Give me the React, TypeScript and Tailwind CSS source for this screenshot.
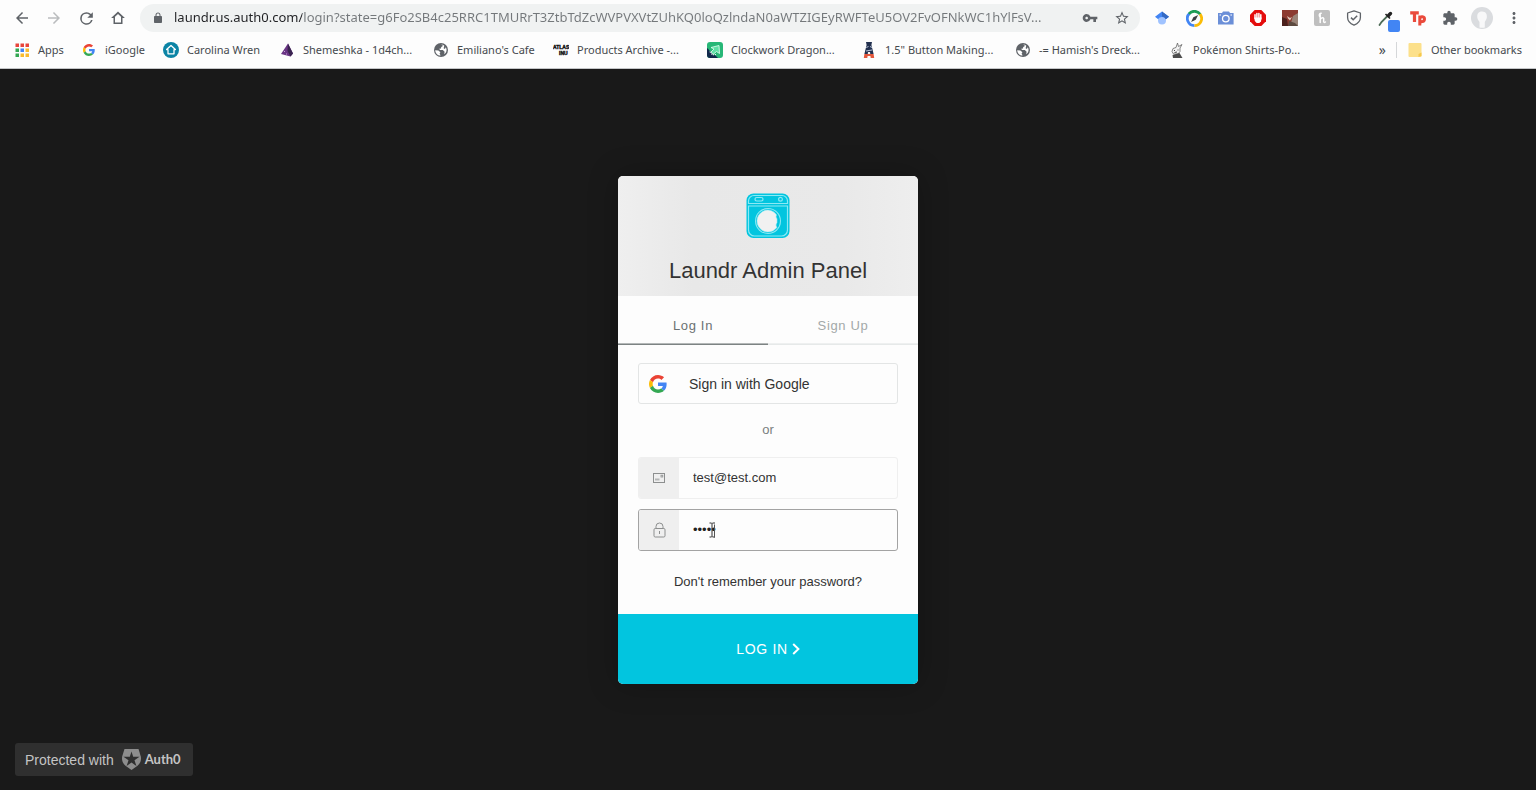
import type { ReactNode } from "react";
import { useState } from "react";

const URL_TEXT =
  "laundr.us.auth0.com/login?state=g6Fo2SB4c25RRC1TMURrT3ZtbTdZcWVPVXVtZUhKQ0loQzlndaN0aWTZIGEyRWFTeU5OV2FvOFNkWC1hYlFsV...";

function GoogleLogo({ className }: { className: string }) {
  return (
    <svg viewBox="0 0 48 48" className={className} aria-hidden="true">
      <path fill="#EA4335" d="M24 9.5c3.54 0 6.71 1.22 9.21 3.6l6.85-6.85C35.9 2.38 30.47 0 24 0 14.62 0 6.51 5.38 2.56 13.22l7.98 6.19C12.43 13.72 17.74 9.5 24 9.5z" />
      <path fill="#4285F4" d="M46.98 24.55c0-1.57-.15-3.09-.38-4.55H24v9.02h12.94c-.58 2.96-2.26 5.48-4.78 7.18l7.73 6c4.51-4.18 7.09-10.36 7.09-17.65z" />
      <path fill="#FBBC05" d="M10.53 28.59c-.48-1.45-.76-2.99-.76-4.59s.27-3.14.76-4.59l-7.98-6.19C.92 16.46 0 20.12 0 24c0 3.88.92 7.54 2.56 10.78l7.97-6.19z" />
      <path fill="#34A853" d="M24 48c6.48 0 11.93-2.13 15.89-5.81l-7.73-6c-2.15 1.45-4.92 2.3-8.16 2.3-6.26 0-11.57-4.22-13.47-9.91l-7.98 6.19C6.51 42.62 14.62 48 24 48z" />
    </svg>
  );
}

function Glyph({ d, className }: { d: string; className: string }) {
  return (
    <svg viewBox="0 0 24 24" fill="currentColor" className={className} aria-hidden="true">
      <path d={d} />
    </svg>
  );
}

const PATHS = {
  back: "M20 11H7.83l5.59-5.59L12 4l-8 8 8 8 1.41-1.41L7.83 13H20v-2z",
  forward: "M12 4l-1.41 1.41L16.17 11H4v2h12.17l-5.58 5.59L12 20l8-8z",
  reload:
    "M17.65 6.35A7.96 7.96 0 0 0 12 4a8 8 0 1 0 7.73 10h-2.08A6 6 0 1 1 12 6c1.66 0 3.14.69 4.22 1.78L13 11h7V4l-2.35 2.35z",
  home: "M12 3.2 2.8 12H6v8h12v-8h3.2L12 3.2zM8 18v-7.6l4-3.9 4 3.9V18H8z",
  lock: "M18 8h-1V6c0-2.76-2.24-5-5-5S7 3.24 7 6v2H6c-1.1 0-2 .9-2 2v10c0 1.1.9 2 2 2h12c1.1 0 2-.9 2-2V10c0-1.1-.9-2-2-2zM9 8V6c0-1.66 1.34-3 3-3s3 1.34 3 3v2H9z",
  key: "M12.65 10A5.99 5.99 0 0 0 7 6c-3.31 0-6 2.69-6 6s2.69 6 6 6a5.99 5.99 0 0 0 5.65-4H17v4h4v-4h2v-4H12.65zM7 14c-1.1 0-2-.9-2-2s.9-2 2-2 2 .9 2 2-.9 2-2 2z",
  star: "M22 9.24l-7.19-.62L12 2 9.19 8.63 2 9.24l5.46 4.73L5.82 21 12 17.27 18.18 21l-1.63-7.03L22 9.24zM12 15.4l-3.76 2.27 1-4.28-3.32-2.88 4.38-.38L12 6.1l1.71 4.04 4.38.38-3.32 2.88 1 4.28L12 15.4z",
  puzzle:
    "M20.5 11H19V7c0-1.1-.9-2-2-2h-4V3.5a2.5 2.5 0 0 0-5 0V5H4c-1.1 0-1.99.9-1.99 2v3.8H3.5c1.49 0 2.7 1.21 2.7 2.7s-1.21 2.7-2.7 2.7H2V20c0 1.1.9 2 2 2h3.8v-1.5c0-1.49 1.21-2.7 2.7-2.7s2.7 1.21 2.7 2.7V22H17c1.1 0 2-.9 2-2v-4h1.5a2.5 2.5 0 0 0 0-5z",
  more: "M12 8c1.1 0 2-.9 2-2s-.9-2-2-2-2 .9-2 2 .9 2 2 2zm0 2c-1.1 0-2 .9-2 2s.9 2 2 2 2-.9 2-2-.9-2-2-2zm0 6c-1.1 0-2 .9-2 2s.9 2 2 2 2-.9 2-2-.9-2-2-2z",
};

function BarButton({ label, children }: { label: string; children: ReactNode }) {
  return (
    <button type="button" aria-label={label} className="flex h-7 w-8 shrink-0 items-center justify-center">
      {children}
    </button>
  );
}

function GlobeIcon() {
  return (
    <svg viewBox="0 0 16 16" className="size-4" aria-hidden="true">
      <circle cx="8" cy="8" r="7" fill="#5f6368" />
      <path fill="#fff" d="M2.2 8.2 5.4 8.6 7.4 10.3 6.6 11.6 7.6 13.5C4.6 13.5 2.3 11.2 2.2 8.2zM7.6 2.6 9.5 2.9 9.6 4.2 8.2 5 8 6.4 6.2 6.8 7 8H9.8L11.6 9.8 11.2 12.3C14 10.4 14.2 7 12.6 5.2L12 7 10.6 6.3 11.3 3.8C10.2 2.8 8.8 2.4 7.6 2.6z" />
    </svg>
  );
}

const APP_COLORS = ["#e8453c", "#e8453c", "#e8453c", "#34a853", "#4285f4", "#f9bb2d", "#34a853", "#f9bb2d", "#f9bb2d"];

function AppsIcon() {
  return (
    <svg viewBox="0 0 16 16" className="size-4" aria-hidden="true">
      {APP_COLORS.map((color, i) => (
        <rect key={i} x={1.5 + (i % 3) * 5} y={1.5 + Math.floor(i / 3) * 5} width="3.5" height="3.5" fill={color} />
      ))}
    </svg>
  );
}

function WrenIcon() {
  return (
    <svg viewBox="0 0 16 16" className="size-4" aria-hidden="true">
      <circle cx="8" cy="8" r="8" fill="#0b84a5" />
      <path d="M8 3.5 3.6 7.6H5v4.2h6V7.6h1.4L8 3.5z" fill="none" stroke="#fff" strokeWidth="1.3" strokeLinejoin="round" />
    </svg>
  );
}

function CrystalIcon() {
  return (
    <svg viewBox="0 0 16 16" className="size-4" aria-hidden="true">
      <path d="M9 1.5 14 11.5 11.5 14.5 2 12z" fill="#6a3585" />
      <path d="M9 1.5 14 11.5 11.5 14.5 8.5 9z" fill="#3a2450" />
      <path d="M5 9.5h1M7 12h1" stroke="#c9a5da" />
    </svg>
  );
}

function AtlasIcon() {
  return (
    <svg viewBox="0 0 16 16" className="size-4" aria-hidden="true">
      <g fontFamily="Liberation Sans, sans-serif" fontWeight="bold" fill="#111" stroke="#111" strokeWidth="0.4">
        <text x="0" y="7" fontSize="5">ATLAS</text>
        <text x="6" y="13" fontSize="5">INU</text>
      </g>
    </svg>
  );
}

function DragonIcon() {
  return (
    <svg viewBox="0 0 16 16" className="size-4" aria-hidden="true">
      <rect width="16" height="16" rx="3" fill="#27b777" />
      <path d="M0 6C2 7 2 9 4 10s1 3 4 3l3 3H3a3 3 0 0 1-3-3z" fill="#10284b" />
      <path d="M4 5.5 12 3.5 12.5 11.5 9.5 9.5 6 12.5 4 10 7 7z" fill="#5fe0a6" stroke="#e9fff5" strokeWidth="0.8" />
      <path d="M3 9.5c.5 3 3 4 6 3" fill="none" stroke="#fff" strokeDasharray="1.2 1" />
    </svg>
  );
}

function ButtonPressIcon() {
  return (
    <svg viewBox="0 0 16 16" className="size-4" aria-hidden="true">
      <path d="M5 0h6l-.6 3 1 4 1.200 5H3.400L4.600 7l1-4z" fill="#22304f" />
      <path d="M5.300 5.500 7.500 4.500M9 4.500l2 1M5 9l6-1" stroke="#b8c3d8" strokeWidth="1" />
      <path d="M6.5 14 7 10h2l.5 4z" fill="#f4f4f4" />
      <path d="M3.400 12h9.200l.6 4H9.700L9.400 14H6.600l-.3 2H2.800z" fill="#e2573c" />
    </svg>
  );
}

function RabbitIcon() {
  return (
    <svg viewBox="0 0 16 16" className="size-4" aria-hidden="true">
      <path d="M7 5.500 8.500 1 9.500 4.500 13 2.500 11 6 11 9.500 9 12H4.500L3 9.500 4 6.500z" fill="#f4f4f4" stroke="#666" strokeWidth="0.8" />
      <path d="M3.5 13 10.500 11 13.500 16H4z" fill="#4d4d4d" />
      <path d="M5 8.500h1M8.500 8h1M5.500 10.500l2.500-.5" stroke="#333" strokeWidth=".9" />
    </svg>
  );
}

const BOOKMARKS: { label: string; width: string; icon: ReactNode }[] = [
  { label: "Apps", width: "w-[67px]", icon: <AppsIcon /> },
  { label: "iGoogle", width: "w-[82px]", icon: <GoogleLogo className="size-3" /> },
  { label: "Carolina Wren", width: "w-[116px]", icon: <WrenIcon /> },
  { label: "Shemeshka - 1d4ch...", width: "w-[154px]", icon: <CrystalIcon /> },
  { label: "Emiliano's Cafe", width: "w-[120px]", icon: <GlobeIcon /> },
  { label: "Products Archive -...", width: "w-[154px]", icon: <AtlasIcon /> },
  { label: "Clockwork Dragon...", width: "w-[154px]", icon: <DragonIcon /> },
  { label: "1.5\" Button Making...", width: "w-[154px]", icon: <ButtonPressIcon /> },
  { label: "-= Hamish's Dreck...", width: "w-[154px]", icon: <GlobeIcon /> },
  { label: "Pokémon Shirts-Po...", width: "w-[154px]", icon: <RabbitIcon /> },
];

function Extensions() {
  return (
    <div className="flex shrink-0">
      <BarButton label="Scholar">
        <svg viewBox="0 0 16 16" className="size-4">
          <circle cx="8" cy="10.5" r="4" fill="#a0c3ff" />
          <path d="M8 1.5 15 6.8 11.8 9.2a4.4 4.4 0 0 0-7.6 0L1 6.8z" fill="#4285f4" />
          <path d="M8 1.5 15 6.8 11.8 9.2A4.4 4.4 0 0 0 8 6.6z" fill="#356ac3" />
        </svg>
      </BarButton>
      <BarButton label="Compass">
        <svg viewBox="0 0 16 16" className="size-[17px]" fill="none" strokeWidth="2.6">
          <path d="M8 14.700A6.700 6.700 0 0 1 3.200 3.300" stroke="#4285f4" />
          <path d="M2.8 3.6A6.7 6.7 0 0 1 13.4 4" stroke="#1e9e57" />
          <path d="M13.2 3.8A6.7 6.7 0 0 1 8 14.7" stroke="#fbbc05" />
          <path d="M4.800 11.200 6.900 6.900 11.400 4.600 9.200 9.200z" fill="#3c4043" />
        </svg>
      </BarButton>
      <BarButton label="Screenshot">
        <svg viewBox="0 0 18 16" className="h-4 w-[18px]">
          <path d="M1 3h4l1-1.6h6L13 3h3.6v11.5H1z" fill="#6b8fd8" />
          <circle cx="8.8" cy="8.6" r="3.3" fill="none" stroke="#fff" strokeWidth="1.3" />
          <path d="M13.4 5h1.6M2.5 5H4" stroke="#fff" />
        </svg>
      </BarButton>
      <BarButton label="Ad blocker">
        <svg viewBox="0 0 16 16" className="size-4">
          <path d="M4.7 0h6.6L16 4.7v6.6L11.3 16H4.7L0 11.3V4.7z" fill="#e40d0d" />
          <path d="M5 8.4V4.8M6.9 8V3.5M8.9 8V3.5M10.8 9V4.8" stroke="#fff" strokeWidth="1.5" strokeLinecap="round" />
          <path d="M4.3 7.5h7.2l-.5 3.8L9.4 13H6.6L4.8 11z" fill="#fff" />
        </svg>
      </BarButton>
      <BarButton label="Portrait">
        <svg viewBox="0 0 16 16" className="size-4">
          <rect width="16" height="16" fill="#8c3a30" />
          <path d="M11 6 16 3v13H8z" fill="#9a8478" />
          <path d="M0 7 5 9 6 16H0z" fill="#4b211d" />
          <path d="M5 6 8 8 10 7 8 10.500 6 8.500z" fill="#e0cabd" />
          <path d="M7 11 13 13 16 16H6z" fill="#5d4a40" />
        </svg>
      </BarButton>
      <BarButton label="Honey">
        <span className="flex size-4 items-center justify-center rounded-xs bg-[#bfbfbf]">
          <svg viewBox="0 0 12 12" className="size-3" fill="none" stroke="#fff" strokeWidth="1.5" strokeLinecap="round">
            <path d="M5.2 1.2C3.2 1 2.8 3.5 4 5M4.2 2v8.6M4.2 7.2C6.5 4.6 8.3 5.5 7.7 8.2 7.3 10.3 8.2 10.8 9.4 10" />
          </svg>
        </span>
      </BarButton>
      <BarButton label="Privacy shield">
        <svg viewBox="0 0 16 16" className="size-4" fill="none" stroke="#5f6368" strokeWidth="1.3">
          <path d="M8 .9 14.4 3v4.6c0 3.6-2.9 6.2-6.4 7.6C4.500 13.800 1.600 11.200 1.600 7.600V3z" strokeLinejoin="round" />
          <path d="M5 7.6 7.200 9.800 11.200 5.800" strokeWidth="1.5" />
        </svg>
      </BarButton>
      <BarButton label="Color picker">
        <span className="relative flex size-4">
          <svg viewBox="0 0 16 16" className="size-4">
            <path d="M9.500 6 3.500 12 1.500 15" stroke="#4d6b56" strokeWidth="1.800" fill="none" strokeLinecap="round" />
            <path d="M7.500 4 12 8.500" stroke="#222" strokeWidth="1.600" />
            <path d="M10.500 5.500 12.500 3.500" stroke="#222" strokeWidth="3.400" strokeLinecap="round" />
          </svg>
          <span className="absolute top-2.5 left-2.5 size-3 rounded-xs bg-[#4285f4]" />
        </span>
      </BarButton>
      <BarButton label="Teachers Pay Teachers">
        <svg viewBox="0 0 18 16" className="h-4 w-[18px]" fill="none" stroke="#ea4a3c" strokeWidth="3.200">
          <path d="M1.200 2.800H9.800M5.500 3V12" strokeLinejoin="round" />
          <path d="M10.800 5.500V15.500M10.800 8.500C11.300 5.800 15.700 6.100 15.500 9.200 15.300 12.200 11.300 12.400 10.800 10" strokeWidth="3" />
        </svg>
      </BarButton>
      <BarButton label="Extensions">
        <Glyph d={PATHS.puzzle} className="size-4 text-[#5f6368]" />
      </BarButton>
      <BarButton label="Profile">
        <svg viewBox="0 0 22 22" className="size-[22px]">
          <circle cx="11" cy="11" r="11" fill="#dadcdf" />
          <path d="M11 4.500c4 0 5.300 3 4.800 6.300-.3 2-1.500 3-2 4.200v5.500a10 10 0 0 1-5.300 0V15c-.8-1.300-2-2.500-2.200-4.500C6 7 7.300 4.500 11 4.500z" fill="#f8f8f9" />
        </svg>
      </BarButton>
      <BarButton label="More">
        <Glyph d={PATHS.more} className="size-[18px] text-[#5f6368]" />
      </BarButton>
    </div>
  );
}

function BrowserBar() {
  return (
    <header className="flex flex-col border-b border-[#c4c6c8] bg-[#fdfdfd] font-['Noto_Sans',sans-serif] text-[#45494d]">
      <div className="flex h-9 items-center px-1.5">
        <nav className="flex shrink-0 text-[#5f6368]">
          <BarButton label="Back"><Glyph d={PATHS.back} className="size-[18px]" /></BarButton>
          <BarButton label="Forward"><Glyph d={PATHS.forward} className="size-[18px] text-[#babcbe]" /></BarButton>
          <BarButton label="Reload"><Glyph d={PATHS.reload} className="size-[19px]" /></BarButton>
          <BarButton label="Home"><Glyph d={PATHS.home} className="size-[18px]" /></BarButton>
        </nav>
        <div className="mx-1.5 flex h-7 min-w-0 flex-1 items-center rounded-full bg-[#f0f2f2] pr-0.5 pl-3 text-[#5f6368]">
          <Glyph d={PATHS.lock} className="size-3 shrink-0" />
          <input
            aria-label="Address"
            defaultValue={URL_TEXT}
            className="ml-2.5 min-w-0 flex-1 bg-[linear-gradient(to_right,#202124_128px,#74787b_128px)] bg-clip-text text-[13px] text-transparent outline-none"
          />
          <BarButton label="Passwords"><Glyph d={PATHS.key} className="size-4" /></BarButton>
          <BarButton label="Bookmark this page"><Glyph d={PATHS.star} className="size-4" /></BarButton>
        </div>
        <Extensions />
      </div>
      <div className="flex h-8 items-start pt-1.5 pr-3.5 pl-3.5 text-[11px] leading-4">
        {BOOKMARKS.map((b) => (
          <a key={b.label} href="#" className={`flex shrink-0 items-center gap-2 whitespace-nowrap ${b.width}`}>
            <span className="flex size-4 shrink-0 items-center justify-center">{b.icon}</span>
            {b.label}
          </a>
        ))}
        <div className="ml-auto flex shrink-0 items-center gap-2">
          <button type="button" aria-label="More bookmarks" className="text-sm leading-4">»</button>
          <span className="mx-0.5 h-4 w-px bg-[#d5d7d9]" />
          <a href="#" className="flex items-center gap-2 whitespace-nowrap">
            <svg viewBox="0 0 16 16" className="size-4" aria-hidden="true">
              <rect x="1.500" y="1" width="13" height="14" rx="1" fill="#fce08a" />
              <path d="M11.500 15V12l3-1.500V14z" fill="#f6c84c" />
            </svg>
            Other bookmarks
          </a>
        </div>
      </div>
    </header>
  );
}

function WasherLogo() {
  return (
    <svg viewBox="0 0 44 46" className="h-[46px] w-11" aria-hidden="true">
      <rect x=".5" y=".5" width="43" height="44.500" rx="7" fill="#02c5df" />
      <g fill="none" stroke="#8be9f4" strokeWidth="1.200">
        <path d="M2.500 10.500V8A5.500 5.500 0 0 1 8 2.500h28A5.500 5.500 0 0 1 41.500 8v2.500z" />
        <path d="M2.500 13h39v24a6 6 0 0 1-6 6h-27a6 6 0 0 1-6-6z" />
        <rect x="9" y="4.500" width="8" height="3.500" rx="1.700" />
        <circle cx="34.500" cy="6.300" r="1.900" />
      </g>
      <circle cx="22" cy="28" r="13" fill="#8be9f4" />
      <circle cx="22" cy="28" r="11.900" fill="#02c5df" />
      <path d="M22 17a11 11 0 1 0 9 17.300c-1.200-1.300-1.300-3 0-4.500v-4c-1-1-1.300-2.600-.4-3.800A11 11 0 0 0 22 17z" fill="#f1f1f1" stroke="#9becf5" strokeWidth=".6" />
    </svg>
  );
}

function LoginCard() {
  const [tab, setTab] = useState("Log In");
  return (
    <form
      onSubmit={(e) => e.preventDefault()}
      className="flex w-[300px] flex-col overflow-hidden rounded-[5px] bg-[#fdfdfd] shadow-[0_0_30px_rgba(0,0,0,0.25)]"
    >
      <div className="flex h-[120px] flex-col items-center bg-[linear-gradient(to_right,#efefef,#e8e8e8_25%,#e9e9e9_75%,#eeeeee)] pt-[17px]">
        <WasherLogo />
        <h1 className="mt-4 text-[22px] leading-8 text-[#333]">Laundr Admin Panel</h1>
      </div>
      <div className="flex text-[13px] tracking-wider">
        {["Log In", "Sign Up"].map((name) => (
          <button
            key={name}
            type="button"
            onClick={() => setTab(name)}
            className={
              tab === name
                ? "h-[49px] flex-1 border-b border-[#7d8383] pt-3 text-[#6b7173] shadow-[inset_0_-1px_0_#b4b8b8]"
                : "h-[49px] flex-1 border-b border-[#e6e9e9] pt-3 text-[#a3a9a9] shadow-[inset_0_-1px_0_#eef0f0]"
            }
          >
            {name}
          </button>
        ))}
      </div>
      <div className="flex flex-col px-5 pt-[18px] pb-[22px]">
        <button type="button" className="flex h-[41px] items-center rounded-[3px] border border-[#e3e5e5] pl-2.5 text-sm text-[#333]">
          <GoogleLogo className="size-[18px]" />
          <span className="ml-[22px]">Sign in with Google</span>
        </button>
        <p className="pt-4 pb-[17px] text-center text-[13px] leading-5 text-[#7a7f80]">or</p>
        <label className="flex h-[42px] overflow-hidden rounded-[3px] border border-[#efefef]">
          <span className="flex w-10 items-center justify-center bg-[#efefef]">
            <svg viewBox="0 0 12 10" className="h-2.5 w-3" fill="none" stroke="#8d8f8f" aria-hidden="true">
              <rect x=".5" y=".5" width="11" height="9" />
              <rect x="8" y="2.200" width="1.800" height="1.800" strokeWidth=".8" />
              <path d="M2 6.500H6.500" strokeWidth="2.200" stroke="#b5b7b7" />
            </svg>
          </span>
          <input
            type="email"
            aria-label="Email"
            defaultValue="test@test.com"
            className="min-w-0 flex-1 px-3.5 text-[13px] text-[#333] outline-none"
          />
        </label>
        <label className="relative mt-2.5 flex h-[42px] overflow-hidden rounded-[3px] border border-[#a3a3a3]">
          <span className="flex w-10 items-center justify-center bg-[#efefef]">
            <svg viewBox="0 0 13 16" className="h-4 w-[13px]" fill="none" stroke="#8d8f8f" aria-hidden="true">
              <rect x="1" y="6.500" width="11" height="8.500" rx="1.200" />
              <path d="M3 6.500V4.500a3.500 3.500 0 0 1 7 0v2M6.500 9v3" />
            </svg>
          </span>
          <input
            type="password"
            aria-label="Password"
            defaultValue="12345"
            className="min-w-0 flex-1 px-3.5 text-[13px] text-[#222] outline-none"
          />
          <svg viewBox="0 0 7 16" className="absolute top-3 left-[70px] h-4 w-[7px]" fill="none" aria-hidden="true">
            <path d="M.5 1H2.500L3 1.500 3.500 1H6M3 1.500V14.500M.5 15H2.500L3 14.500 3.500 15H6" stroke="#333" />
            <path d="M5.500 2.500V15.500" stroke="#555" />
          </svg>
        </label>
        <a href="#" className="mt-[21px] text-center text-[13px] leading-5 text-[#333]">
          Don't remember your password?
        </a>
      </div>
      <button type="submit" className="flex h-[70px] items-center justify-center gap-1 bg-[#02c5df] text-sm tracking-wider text-white">
        LOG IN
        <svg viewBox="0 0 8 12" className="h-3 w-2" fill="none" stroke="currentColor" strokeWidth="2" aria-hidden="true">
          <path d="M1.200 1 6.400 6 1.200 11" />
        </svg>
      </button>
    </form>
  );
}

function ProtectedBadge() {
  return (
    <a href="#" className="absolute bottom-3.5 left-[15px] flex h-[33px] items-center rounded-[3px] bg-[#2f2f2f] px-3 pl-2.5 text-[#c4c4c4]">
      <span className="text-sm">Protected with</span>
      <svg viewBox="0 0 19 21" className="mr-1 ml-2 h-[21px] w-[19px]" aria-hidden="true">
        <path d="M2.500 0h14l2.300 7.500c.7 4-.6 7-3.300 9.200L9.500 21l-6-4.300C.8 14.500-.5 11.500.2 7.500z" fill="#8d8d8d" />
        <path d="M9.500 2.500 11.200 7.800H17.500L12.500 11.300 14.400 17 9.500 13.500 4.600 17 6.500 11.300 1.500 7.800H7.800z" fill="#2f2f2f" />
      </svg>
      <span className="font-['Lato',sans-serif] text-[13px] font-bold">Auth0</span>
    </a>
  );
}

export default function App() {
  return (
    <div className="flex min-h-screen flex-col bg-[#191919] font-['Liberation_Sans',Arial,sans-serif]">
      <BrowserBar />
      <main className="relative flex flex-1 items-center justify-center pt-px">
        <LoginCard />
        <ProtectedBadge />
      </main>
    </div>
  );
}
